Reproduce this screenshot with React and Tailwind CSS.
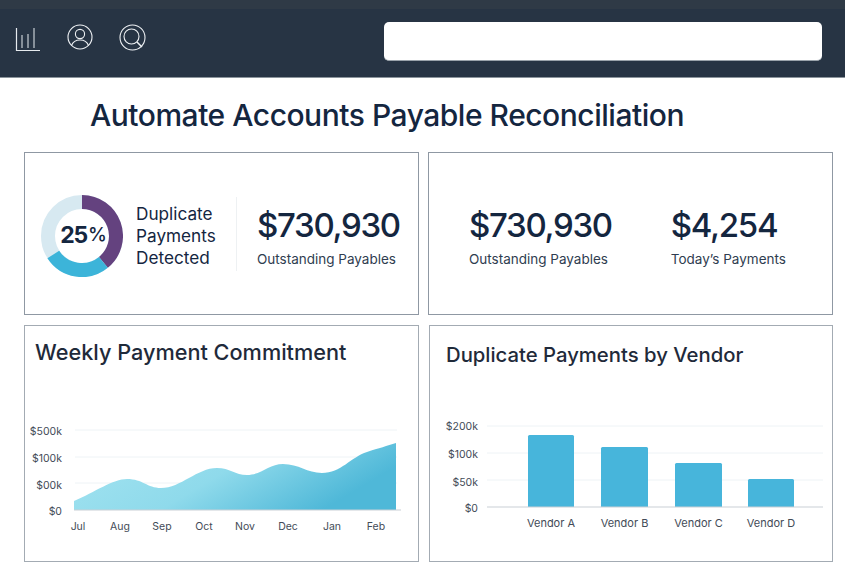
import React from "react";

const font = { fontFamily: "Inter, 'Noto Sans', sans-serif" };

const BarsIcon = () => (
  <svg width="26" height="27" viewBox="0 0 26 27" fill="none" stroke="#e6ebef" strokeWidth="1">
    <path d="M1.500 3v22.500H25" strokeWidth="1.200" />
    <path d="M7 10v13M13 9v14M19 3v20" />
  </svg>
);

const UserIcon = () => (
  <svg width="26" height="26" viewBox="0 0 26 26" fill="none" stroke="#eef1f4" strokeWidth="1.100">
    <circle cx="13" cy="13" r="12" />
    <circle cx="13" cy="10" r="4.600" />
    <path d="M4.500 21.500c1.500-4 4.500-5.500 8.500-5.500s7 1.500 8.500 5.500" />
  </svg>
);

const SearchIcon = () => (
  <svg width="27" height="27" viewBox="0 0 27 27" fill="none" stroke="#eef1f4" strokeWidth="1.100">
    <circle cx="13.500" cy="13.500" r="12.500" />
    <circle cx="12.500" cy="12.500" r="7.500" />
    <path d="M18 18l5 5" strokeWidth="1.500" />
  </svg>
);

const Donut = () => (
  <div className="relative w-[82px] h-[82px] shrink-0">
    <svg width="82" height="82" viewBox="0 0 82 82" fill="none" strokeWidth="14">
      <circle cx="41" cy="41" r="34" stroke="#d7e9f1" />
      <path d="M41 7A34 34 0 0 1 62.400 67.400" stroke="#64427f" />
      <path d="M62.400 67.400A34 34 0 0 1 12.300 59.500" stroke="#3cb4d9" />
    </svg>
    <div className="absolute inset-0 flex items-center justify-center pl-[2px] text-[23px] font-bold tracking-[-1.200px] text-[#14263f]">
      25<span className="ml-[1px] text-[19px] font-medium">%</span>
    </div>
  </div>
);

const Stat = ({ value, label, className }) => (
  <div className={className}>
    <div className="text-[33px] leading-[44px] font-medium tracking-[-1.300px] text-[#14263f]">{value}</div>
    <div className="mt-[3px] text-[13.500px] leading-[18px] text-[#2f3d50]">{label}</div>
  </div>
);

const AreaChart = () => {
  const ticks = [["$500k", 21], ["$100k", 48], ["$00k", 75], ["$0", 101]];
  const months = [["Jul", 53], ["Aug", 95], ["Sep", 137], ["Oct", 179], ["Nov", 220], ["Dec", 263], ["Jan", 307], ["Feb", 351]];
  return (
    <svg width="393" height="140" viewBox="0 0 393 140" className="block" style={font}>
      <defs>
        <linearGradient id="area" x1="0" y1="0" x2="1" y2="0.35">
          <stop offset="0" stopColor="#a4e4f1" />
          <stop offset="0.55" stopColor="#8fdaeb" />
          <stop offset="1" stopColor="#4fb8d8" />
        </linearGradient>
      </defs>
      <path d="M50 20H372M50 47H372M50 73H372" stroke="#eef3f6" />
      <path
        d="M49 91C70 82 88 69 102 69C118 69 122 78 136 78C156 78 172 58 192 58C205 58 210 65 222 65C236 65 244 54 258 54C274 54 282 63 297 63C316 63 326 47 342 42C354 38 362 36 371 33V100H49Z"
        fill="url(#area)"
      />
      <path d="M49 100H376" stroke="#c9d0d6" strokeWidth="1.200" />
      {ticks.map(([t, y]) => (
        <text key={t} x="37" y={y + 4} textAnchor="end" fontSize="10.500" fill="#434b57">{t}</text>
      ))}
      {months.map(([m, x]) => (
        <text key={m} x={x} y="120" textAnchor="middle" fontSize="10.500" fill="#434b57">{m}</text>
      ))}
    </svg>
  );
};

const BarChart = () => {
  const ticks = [["$200k", 16], ["$100k", 44], ["$50k", 72], ["$0", 98]];
  const bars = [
    ["Vendor A", 98, 25, 46],
    ["Vendor B", 171, 37, 47],
    ["Vendor C", 245, 53, 47],
    ["Vendor D", 318, 69, 46],
  ];
  return (
    <svg width="402" height="140" viewBox="0 0 402 140" className="block" style={font}>
      <path d="M57 16H393M57 43H393M57 70H393" stroke="#eef3f6" />
      {bars.map(([name, x, y, w]) => (
        <g key={name}>
          <path d={`M${x} 97V${y + 1.500}q0 -1.500 1.500 -1.500H${x + w - 1.500}q1.500 0 1.500 1.500V97Z`} fill="#47b5db" />
          <text x={x + w / 2} y="117" textAnchor="middle" fontSize="11" fill="#434b57">{name}</text>
        </g>
      ))}
      <path d="M57 97H393" stroke="#c9d0d6" strokeWidth="1.200" />
      {ticks.map(([t, y]) => (
        <text key={t} x="48" y={y + 4} textAnchor="end" fontSize="10.500" fill="#434b57">{t}</text>
      ))}
    </svg>
  );
};

export default function App() {
  return (
    <div className="w-[845px] h-[580px] overflow-hidden bg-white" style={font}>
      <header className="h-[78px] border-b border-[#8b949c] bg-[#273444]">
        <div className="h-[9px] bg-[#2f3a46]" />
        <div className="flex items-start pl-[15px] pt-[13px]">
          <div className="mt-[3px]"><BarsIcon /></div>
          <div className="ml-[26px] mt-[2px]"><UserIcon /></div>
          <div className="ml-[26px] mt-[2px]"><SearchIcon /></div>
          <div className="ml-[238px] h-[39px] w-[438px] rounded-[5px] bg-white border-b border-[#9aa3ab]" />
        </div>
      </header>

      <h1 className="pl-[90px] pt-[19px] h-[74px] text-[30px] leading-[37px] font-medium tracking-[-0.48px] text-[#14263f]">
        Automate Accounts Payable Reconciliation
      </h1>

      <div className="ml-[24px] grid grid-cols-[395px_405px] grid-rows-[163px_237px] gap-y-[10px] gap-x-[9px]">
        <div className="border border-[#8f98a3] flex items-center pl-[16px]">
          <div className="mt-[4px]"><Donut /></div>
          <div className="ml-[13px] mt-[5px] w-[100px] text-[17.200px] leading-[22px] text-[#14263f]">
            Duplicate Payments Detected
          </div>
          <div className="h-[74px] w-px bg-[#eef1f3]" />
          <Stat className="ml-[20px] mt-[3px]" value="$730,930" label="Outstanding Payables" />
        </div>

        <div className="border border-[#8f98a3] flex items-center pl-[40px]">
          <Stat className="mt-[3px]" value="$730,930" label="Outstanding Payables" />
          <Stat className="ml-[59px] mt-[3px]" value="$4,254" label="Today’s Payments" />
        </div>

        <div className="border border-[#a3abb3] flex flex-col">
          <div className="h-[84px] pl-[10px] pt-[10px] text-[21.700px] leading-[32px] font-medium text-[#1f2a3a]">
            Weekly Payment Commitment
          </div>
          <AreaChart />
        </div>

        <div className="border border-[#a3abb3] flex flex-col ml-px">
          <div className="h-[84px] pl-[16px] pt-[14px] text-[20.300px] leading-[30px] font-medium text-[#1f2a3a]">
            Duplicate Payments by Vendor
          </div>
          <BarChart />
        </div>
      </div>
    </div>
  );
}
